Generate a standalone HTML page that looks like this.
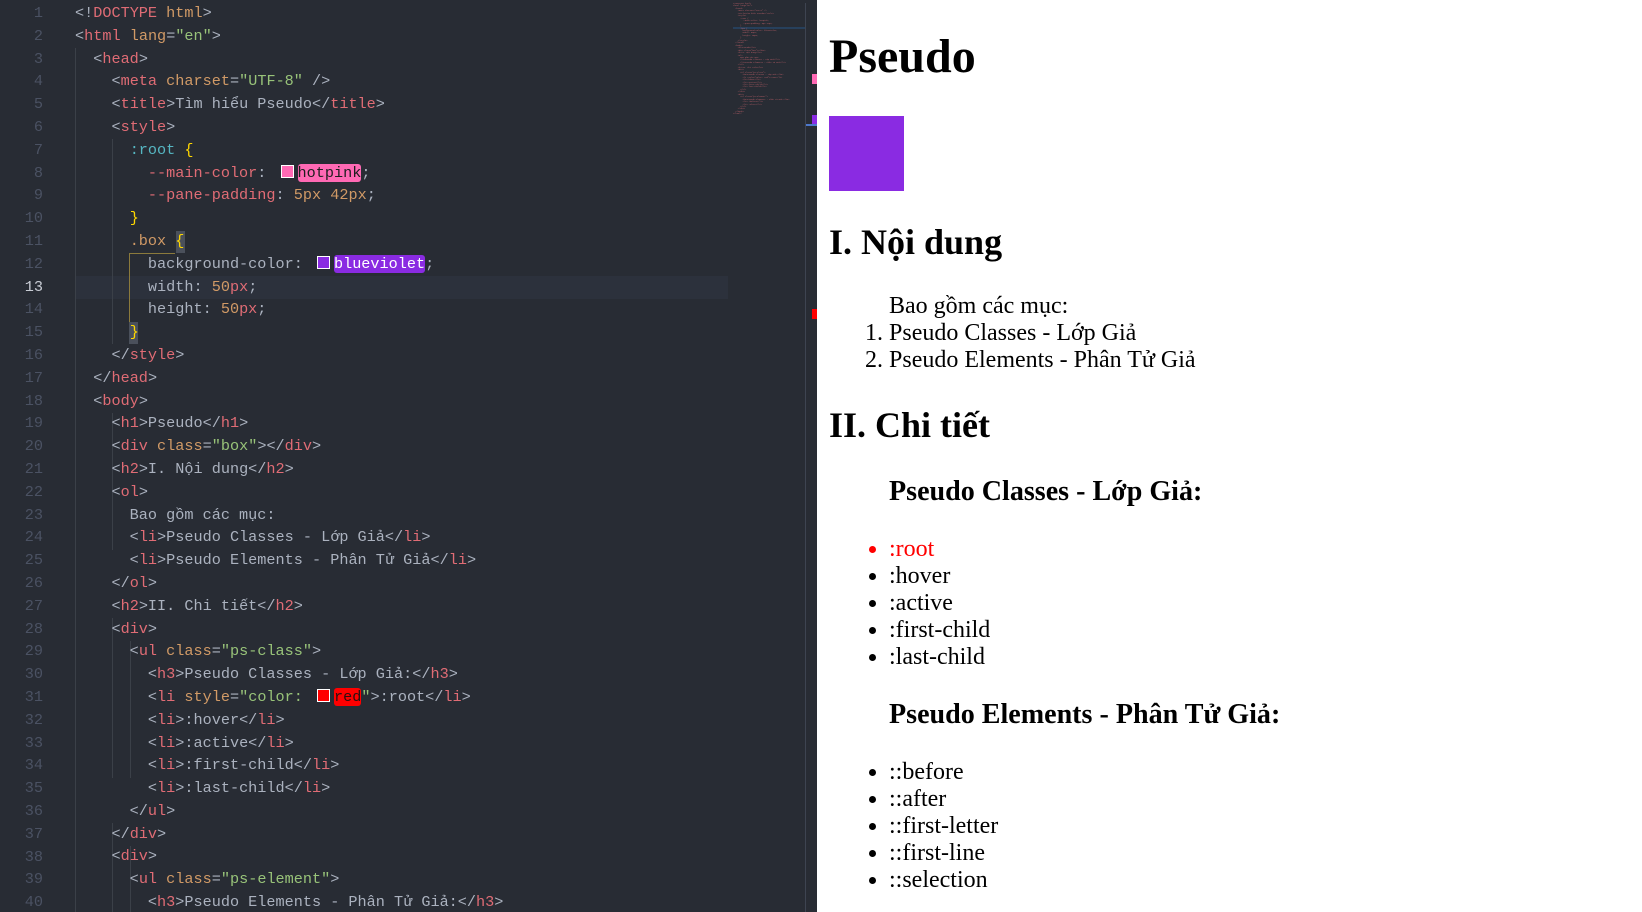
<!DOCTYPE html>
<html><head><meta charset="utf-8">
<style>
html,body{margin:0;padding:0;width:1642px;height:912px;overflow:hidden;background:#fff}
#ed{position:absolute;left:0;top:0;width:817px;height:912px;background:#282c34;overflow:hidden}
.ln{position:absolute;left:0;width:43px;text-align:right;font:15.2px/22.8px "Liberation Mono","DejaVu Sans Mono",monospace;color:#4b5263}
.ln.cur{color:#c8ccd4}
.code{position:absolute;left:75px;white-space:pre;font:15.2px/22.8px "Liberation Mono","DejaVu Sans Mono",monospace;color:#abb2bf}
.t{color:#e06c75}.a{color:#d19a66}.s{color:#98c379}.c{color:#56b6c2}.b{color:#ffd700}.n{color:#d19a66}.u{color:#e06c75}
.sw{display:inline-block;box-sizing:border-box;width:13px;height:13px;border:1px solid #fff;margin:0 4px 0 5px;vertical-align:-1px}
.hl{border-radius:3px}
.g{position:absolute;width:1px;background:#3b4048}
#rp{position:absolute;left:817px;top:-3px;width:825px;height:915px;background:#fff;overflow:hidden}
#inner{zoom:1.5;font-family:"Liberation Serif","Noto Serif CJK SC",serif;font-size:16px;color:#000;padding:0;margin:0}
#inner .body{margin:8px}
#inner h1{font-size:2em;margin:.67em 0}
#inner h2{font-size:1.5em;margin:.83em 0}
#inner h3{font-size:1.17em;margin:1em 0}
#inner ol,#inner ul{margin:1em 0;padding-left:40px}
.box{background:blueviolet;width:50px;height:50px}
#mini{position:absolute;left:733px;top:3px;white-space:pre;font:2px/2.45px "Liberation Mono",monospace;color:#abb2bf;opacity:.8}
</style></head><body>
<div id="ed">
<div style="position:absolute;left:75px;top:276px;width:653px;height:23px;background:#2c313c"></div>
<div class="g" style="left:75px;top:48px;height:864px"></div>
<div class="g" style="left:112px;top:139px;height:205px"></div>
<div class="g" style="left:112px;top:413px;height:137px"></div>
<div class="g" style="left:112px;top:618px;height:160px"></div>
<div class="g" style="left:112px;top:823px;height:89px"></div>
<div class="g" style="left:130px;top:641px;height:137px"></div>
<div class="g" style="left:130px;top:846px;height:66px"></div>
<div style="position:absolute;left:129px;top:253px;width:1px;height:70px;background:#8b7a3c"></div>
<div style="position:absolute;left:129px;top:253px;width:46px;height:1px;background:#8b7a3c"></div>
<div style="position:absolute;left:176px;top:231px;width:9px;height:22px;background:#4a505b"></div>
<div style="position:absolute;left:129px;top:322px;width:9px;height:22px;background:#4a505b"></div>
<div id="lns"></div>
<div class="code" style="top:2px"><span class="p">&lt;!</span><span class="t">DOCTYPE</span> <span class="a">html</span>&gt;
&lt;<span class="t">html</span> <span class="a">lang</span>=<span class="s">"en"</span>&gt;
  &lt;<span class="t">head</span>&gt;
    &lt;<span class="t">meta</span> <span class="a">charset</span>=<span class="s">"UTF-8"</span> /&gt;
    &lt;<span class="t">title</span>&gt;Tìm hiểu Pseudo&lt;/<span class="t">title</span>&gt;
    &lt;<span class="t">style</span>&gt;
      <span class="c">:root</span> <span class="b">{</span>
        <span class="t">--main-color</span>: <span class="sw" style="background:hotpink"></span><span class="hl" style="background:hotpink;color:#1e1e1e">hotpink</span>;
        <span class="t">--pane-padding</span>: <span class="n">5px</span> <span class="n">42px</span>;
      <span class="b">}</span>
      <span class="a">.box</span> <span class="b">{</span>
        background-color: <span class="sw" style="background:blueviolet"></span><span class="hl" style="background:blueviolet;color:#fff">blueviolet</span>;
        width: <span class="n">50</span><span class="u">px</span>;
        height: <span class="n">50</span><span class="u">px</span>;
      <span class="b">}</span>
    &lt;/<span class="t">style</span>&gt;
  &lt;/<span class="t">head</span>&gt;
  &lt;<span class="t">body</span>&gt;
    &lt;<span class="t">h1</span>&gt;Pseudo&lt;/<span class="t">h1</span>&gt;
    &lt;<span class="t">div</span> <span class="a">class</span>=<span class="s">"box"</span>&gt;&lt;/<span class="t">div</span>&gt;
    &lt;<span class="t">h2</span>&gt;I. Nội dung&lt;/<span class="t">h2</span>&gt;
    &lt;<span class="t">ol</span>&gt;
      Bao gồm các mục:
      &lt;<span class="t">li</span>&gt;Pseudo Classes - Lớp Giả&lt;/<span class="t">li</span>&gt;
      &lt;<span class="t">li</span>&gt;Pseudo Elements - Phân Tử Giả&lt;/<span class="t">li</span>&gt;
    &lt;/<span class="t">ol</span>&gt;
    &lt;<span class="t">h2</span>&gt;II. Chi tiết&lt;/<span class="t">h2</span>&gt;
    &lt;<span class="t">div</span>&gt;
      &lt;<span class="t">ul</span> <span class="a">class</span>=<span class="s">"ps-class"</span>&gt;
        &lt;<span class="t">h3</span>&gt;Pseudo Classes - Lớp Giả:&lt;/<span class="t">h3</span>&gt;
        &lt;<span class="t">li</span> <span class="a">style</span>=<span class="s">"color: </span><span class="sw" style="background:red"></span><span class="hl" style="background:red;color:#2a1010">red</span><span class="s">"</span>&gt;:root&lt;/<span class="t">li</span>&gt;
        &lt;<span class="t">li</span>&gt;:hover&lt;/<span class="t">li</span>&gt;
        &lt;<span class="t">li</span>&gt;:active&lt;/<span class="t">li</span>&gt;
        &lt;<span class="t">li</span>&gt;:first-child&lt;/<span class="t">li</span>&gt;
        &lt;<span class="t">li</span>&gt;:last-child&lt;/<span class="t">li</span>&gt;
      &lt;/<span class="t">ul</span>&gt;
    &lt;/<span class="t">div</span>&gt;
    &lt;<span class="t">div</span>&gt;
      &lt;<span class="t">ul</span> <span class="a">class</span>=<span class="s">"ps-element"</span>&gt;
        &lt;<span class="t">h3</span>&gt;Pseudo Elements - Phân Tử Giả:&lt;/<span class="t">h3</span>&gt;</div>
<div style="position:absolute;left:733px;top:27px;width:72px;height:2px;background:#264f78;opacity:.6"></div>
<div id="mini"><span class="t">&lt;!DOCTYPE html&gt;
&lt;html lang="en"&gt;
  &lt;head&gt;
    &lt;meta charset="UTF-8" /&gt;
    &lt;title&gt;Tìm hiểu Pseudo&lt;/title&gt;
    &lt;style&gt;
      :root {
        --main-color: hotpink;
        --pane-padding: 5px 42px;
      }
      .box {
        background-color: blueviolet;
        width: 50px;
        height: 50px;
      }
    &lt;/style&gt;
  &lt;/head&gt;
  &lt;body&gt;
    &lt;h1&gt;Pseudo&lt;/h1&gt;
    &lt;div class="box"&gt;&lt;/div&gt;
    &lt;h2&gt;I. Nội dung&lt;/h2&gt;
    &lt;ol&gt;
      Bao gồm các mục:
      &lt;li&gt;Pseudo Classes - Lớp Giả&lt;/li&gt;
      &lt;li&gt;Pseudo Elements - Phân Tử Giả&lt;/li&gt;
    &lt;/ol&gt;
    &lt;h2&gt;II. Chi tiết&lt;/h2&gt;
    &lt;div&gt;
      &lt;ul class="ps-class"&gt;
        &lt;h3&gt;Pseudo Classes - Lớp Giả:&lt;/h3&gt;
        &lt;li style="color: red"&gt;:root&lt;/li&gt;
        &lt;li&gt;:hover&lt;/li&gt;
        &lt;li&gt;:active&lt;/li&gt;
        &lt;li&gt;:first-child&lt;/li&gt;
        &lt;li&gt;:last-child&lt;/li&gt;
      &lt;/ul&gt;
    &lt;/div&gt;
    &lt;div&gt;
      &lt;ul class="ps-element"&gt;
        &lt;h3&gt;Pseudo Elements - Phân Tử Giả:&lt;/h3&gt;
        &lt;li&gt;::before&lt;/li&gt;
        &lt;li&gt;::after&lt;/li&gt;
      &lt;/ul&gt;
    &lt;/div&gt;
  &lt;/body&gt;
&lt;/html&gt;</span></div>
<div style="position:absolute;left:805px;top:3px;width:1px;height:909px;background:#3e4451"></div>
<div style="position:absolute;left:812px;top:74px;width:5px;height:10px;background:#ff69b4"></div>
<div style="position:absolute;left:812px;top:115px;width:5px;height:9px;background:#8a2be2"></div>
<div style="position:absolute;left:806px;top:124px;width:11px;height:2px;background:#4d78cc"></div>
<div style="position:absolute;left:812px;top:309px;width:5px;height:10px;background:#f00"></div>
</div>
<div id="rp"><div id="inner"><div class="body">
<h1>Pseudo</h1>
<div class="box"></div>
<h2>I. Nội dung</h2>
<ol>Bao gồm các mục:<li>Pseudo Classes - Lớp Giả</li><li>Pseudo Elements - Phân Tử Giả</li></ol>
<h2>II. Chi tiết</h2>
<div><ul><h3>Pseudo Classes - Lớp Giả:</h3><li style="color:red">:root</li><li>:hover</li><li>:active</li><li>:first-child</li><li>:last-child</li></ul></div>
<div><ul><h3>Pseudo Elements - Phân Tử Giả:</h3><li>::before</li><li>::after</li><li>::first-letter</li><li>::first-line</li><li>::selection</li></ul></div>
</div></div></div>
<script>
var h='';for(var i=1;i<=40;i++){h+='<div class="ln'+(i==13?' cur':'')+'" style="top:'+(2+(i-1)*22.8)+'px">'+i+'</div>';}
document.getElementById('lns').innerHTML=h;
</script>
</body></html>
